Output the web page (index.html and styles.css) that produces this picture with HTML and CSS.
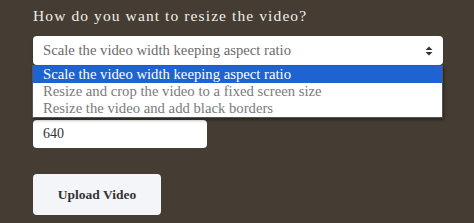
FILE: index.html
```html
<!DOCTYPE html>
<html>
<head>
<meta charset="utf-8">
<link rel="stylesheet" href="styles.css">
</head>
<body>
<form class="form">
  <div class="field">
    <label class="label">How do you want to resize the video?</label>
    <div class="select-wrap">
      <div class="select">
        <span class="select-text">Scale the video width keeping aspect ratio</span>
        <svg class="arrows" width="8" height="10" viewBox="0 0 8 10"><path d="M4 0.5 L7.5 4 L0.5 4 Z M4 9.5 L7.5 6 L0.5 6 Z" fill="#333"/></svg>
      </div>
      <ul class="dropdown">
        <li class="opt selected">Scale the video width keeping aspect ratio</li>
        <li class="opt">Resize and crop the video to a fixed screen size</li>
        <li class="opt">Resize the video and add black borders</li>
      </ul>
    </div>
  </div>
  <div class="field">
    <label class="label">Width</label>
    <div class="input">640</div>
  </div>
  <button type="button" class="btn">Upload Video</button>
</form>
</body>
</html>
```
FILE: styles.css
```css
html, body {
  margin: 0;
  padding: 0;
  background: #453d33;
  height: 100%;
}
body {
  font-family: "Liberation Serif", "DejaVu Serif", serif;
  overflow: hidden;
}
.form {
  display: flex;
  flex-direction: column;
  padding: 7px 0 0 33px;
  width: 410px;
}
.field {
  display: flex;
  flex-direction: column;
}
.label {
  color: #f1efe9;
  font-size: 15.5px;
  line-height: 18px;
  letter-spacing: 1.1px;
}
.select-wrap {
  position: relative;
  margin-top: 11px;
}
.select {
  height: 29px;
  background: #fff;
  border-radius: 4px;
  display: flex;
  align-items: center;
  justify-content: space-between;
  padding: 0 10px 0 10px;
  box-shadow: 0 1px 2px rgba(0,0,0,0.3);
}
.select-text {
  color: #6b6b6b;
  font-size: 14.7px;
}
.arrows { display: block; }
.dropdown {
  position: absolute;
  left: -1px;
  right: 0;
  top: 29px;
  margin: 0;
  padding: 0;
  list-style: none;
  background: #fff;
  border: 1px solid #555;
  box-shadow: 1px 2px 3px rgba(0,0,0,0.4);
  z-index: 2;
}
.opt {
  height: 17px;
  line-height: 17px;
  font-size: 14.7px;
  color: #7a7a7a;
  padding-left: 10px;
}
.opt.selected {
  background: #1f63d2;
  color: #fff;
}
.field + .field { margin-top: 31px; }
.field + .field .label { visibility: hidden; height: 18px; margin-bottom: 6px; }
.input {
  width: 164px;
  height: 28px;
  background: #fff;
  border-radius: 4px;
  padding-left: 10px;
  display: flex;
  align-items: center;
  color: #333;
  font-size: 14px;
}
.btn {
  margin-top: 26px;
  width: 128px;
  height: 41px;
  background: #f3f5f9;
  border: none;
  border-radius: 4px;
  font-family: inherit;
  font-weight: bold;
  font-size: 13.5px;
  color: #333;
  padding: 0;
}
```
